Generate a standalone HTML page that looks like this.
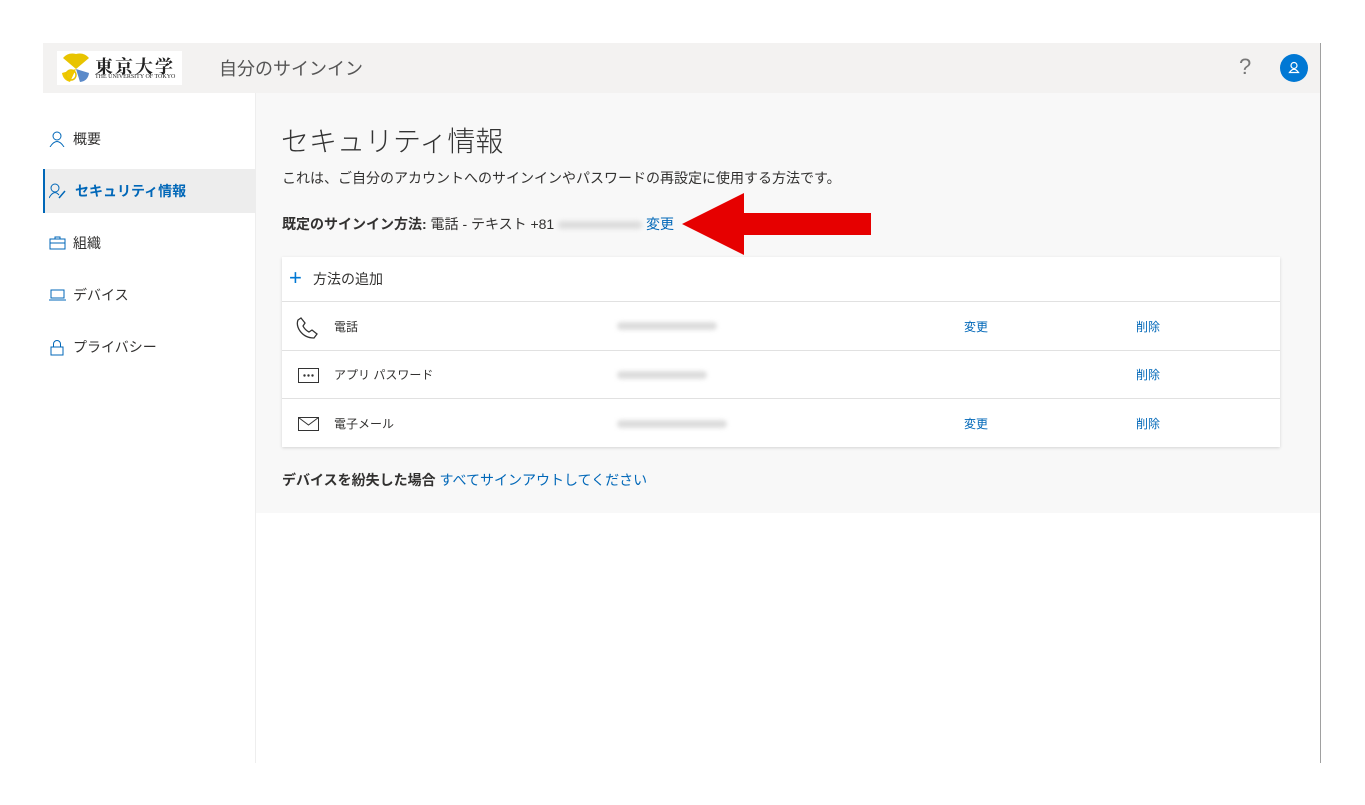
<!DOCTYPE html>
<html><head><meta charset="utf-8"><style>
*{margin:0;padding:0;box-sizing:border-box}
body{width:1365px;height:805px;background:#fff;font-family:"Liberation Sans","Noto Sans CJK JP",sans-serif;color:#323130;position:relative;overflow:hidden}
.abs{position:absolute}
.hdr{left:43px;top:43px;width:1278px;height:50px;background:#f3f2f1}
.vline{left:1320px;top:43px;width:1px;height:720px;background:#a0a0a0}
.side{left:43px;top:93px;width:213px;height:670px;background:#fff;border-right:1px solid #eee}
.main{left:256px;top:93px;width:1064px;height:420px;background:#f8f8f8}
.nav{position:absolute;left:0;width:213px;height:44px;display:flex;align-items:center;font-size:14px;padding-left:30px}
.nav svg{position:absolute;left:6px}
.link{color:#0067b8}
.card{left:282px;top:257px;width:998px;height:190px;background:#fff;box-shadow:0 1px 3px rgba(0,0,0,.15)}
.row{position:absolute;left:0;width:998px;border-top:1px solid #e1e1e1;font-size:12px;display:flex;align-items:center}
.blur{position:absolute;height:8px;background:#ddd;border-radius:4px;filter:blur(2px)}
</style></head><body>
<div class="abs hdr"></div>
<div class="abs vline"></div>
<div class="abs" style="left:57px;top:51px;width:125px;height:34px;background:#fff"></div>
<svg class="abs" style="left:60px;top:53px" width="32" height="30" viewBox="0 0 32 30"><path d="M16 16 L3 5 Q8 -1 16 1 Q24 -1 29 5 Z" fill="#e8c400"/><path d="M16 16 L10 29 Q3 27 2 20 Z" fill="#f0c800"/><path d="M16 16 L29 20 Q28 28 20 29 Z" fill="#5b8ac9"/><circle cx="11" cy="22" r="5" fill="none" stroke="#e8c400" stroke-width="1.5"/></svg>
<div class="abs" style="left:95px;top:53px;font-family:'Noto Serif CJK SC',serif;font-weight:bold;font-size:18px;color:#222;letter-spacing:2px">東京大学</div>
<div class="abs" style="left:95px;top:74px;font-family:'Liberation Serif',serif;font-size:6px;color:#222">THE UNIVERSITY OF TOKYO</div>
<div class="abs" style="left:219px;top:55px;font-size:18px;color:#555">自分のサインイン</div>
<div class="abs" style="left:1239px;top:54px;font-size:22px;color:#777;font-weight:300">?</div>
<div class="abs" style="left:1280px;top:54px;width:28px;height:28px;border-radius:50%;background:#0078d4"><svg width="28" height="28"><circle cx="14" cy="11.5" r="3" fill="none" stroke="#fff" stroke-width="1.2"/><path d="M9.5 18.5 Q14 12 18.5 18.5 Z" fill="none" stroke="#fff" stroke-width="1.2"/></svg></div>

<div class="abs side">
 <div class="nav" style="top:24px"><svg width="16" height="16"><circle cx="8" cy="5" r="4" fill="none" stroke="#0067b8"/><path d="M1 16 Q8 5 15 16" fill="none" stroke="#0067b8"/></svg>概要</div>
 <div class="nav" style="top:76px;background:#ededed;border-left:2px solid #0067b8;color:#0067b8;font-weight:bold"><svg width="18" height="16" style="left:4px"><circle cx="6" cy="5" r="4" fill="none" stroke="#0067b8"/><path d="M0 15 Q5 6 10 12" fill="none" stroke="#0067b8"/><path d="M10 15 L16 8" stroke="#0067b8" stroke-width="1.5"/></svg>セキュリティ情報</div>
 <div class="nav" style="top:128px"><svg width="17" height="14"><rect x="1" y="3" width="15" height="10" fill="none" stroke="#0067b8"/><path d="M6 3V1h5v2M1 7h15" fill="none" stroke="#0067b8"/></svg>組織</div>
 <div class="nav" style="top:180px"><svg width="17" height="14"><rect x="2" y="2" width="13" height="8" fill="none" stroke="#0067b8"/><path d="M0 12h17" stroke="#0067b8"/></svg>デバイス</div>
 <div class="nav" style="top:232px"><svg width="16" height="17"><rect x="2" y="8" width="12" height="8" fill="none" stroke="#0067b8"/><path d="M4.5 8V5a3.5 3.5 0 0 1 7 0v3" fill="none" stroke="#0067b8"/></svg>プライバシー</div>
</div>

<div class="abs main"></div>
<div class="abs" style="left:281px;top:120px;font-size:28px;font-weight:300;color:#333">セキュリティ情報</div>
<div class="abs" style="left:282px;top:168px;font-size:14px">これは、ご自分のアカウントへのサインインやパスワードの再設定に使用する方法です。</div>
<div class="abs" style="left:282px;top:214px;font-size:14px;white-space:nowrap"><b>既定のサインイン方法:</b> 電話 - テキスト +81 <span style="display:inline-block;width:84px;height:8px;background:#ddd;border-radius:4px;filter:blur(2px);vertical-align:middle"></span> <span class="link">変更</span></div>
<svg class="abs" style="left:682px;top:193px" width="190" height="62"><path d="M0 31 L62 0 L62 20 L189 20 L189 42 L62 42 L62 62 Z" fill="#e60000"/></svg>

<div class="abs card">
 <div class="row" style="top:0;height:44px;border-top:none;font-size:14px;padding-left:31px"><span class="abs" style="left:7px;top:10px;font-size:22px;color:#0078d4;font-weight:300;line-height:22px">+</span>方法の追加</div>
 <div class="row" style="top:44px;height:49px;padding-left:52px">電話
  <svg class="abs" style="left:14px;top:15px" width="22" height="22" viewBox="0 0 22 22"><path d="M5 1 L9 6 L7 9 Q9 13 13 15 L16 13 L21 17 L18 21 Q9 21 4 14 Q0 8 2 3 Z" fill="none" stroke="#333" stroke-width="1.3"/></svg>
  <div class="blur" style="left:335px;top:20px;width:100px"></div>
  <span class="link abs" style="left:682px">変更</span><span class="link abs" style="left:854px">削除</span></div>
 <div class="row" style="top:93px;height:48px;padding-left:52px">アプリ パスワード
  <svg class="abs" style="left:16px;top:17px" width="21" height="15"><rect x="0.5" y="0.5" width="20" height="14" fill="none" stroke="#333"/><circle cx="6.5" cy="7.5" r="1.2" fill="#333"/><circle cx="10.5" cy="7.5" r="1.2" fill="#333"/><circle cx="14.5" cy="7.5" r="1.2" fill="#333"/></svg>
  <div class="blur" style="left:335px;top:20px;width:90px"></div>
  <span class="link abs" style="left:854px">削除</span></div>
 <div class="row" style="top:141px;height:49px;padding-left:52px">電子メール
  <svg class="abs" style="left:16px;top:18px" width="21" height="14"><rect x="0.5" y="0.5" width="20" height="13" fill="none" stroke="#333"/><path d="M0.5 0.5 L10.5 8 L20.5 0.5" fill="none" stroke="#333"/></svg>
  <div class="blur" style="left:335px;top:21px;width:110px"></div>
  <span class="link abs" style="left:682px">変更</span><span class="link abs" style="left:854px">削除</span></div>
</div>
<div class="abs" style="left:282px;top:470px;font-size:14px"><b>デバイスを紛失した場合</b> <span class="link">すべてサインアウトしてください</span></div>
</body></html>
